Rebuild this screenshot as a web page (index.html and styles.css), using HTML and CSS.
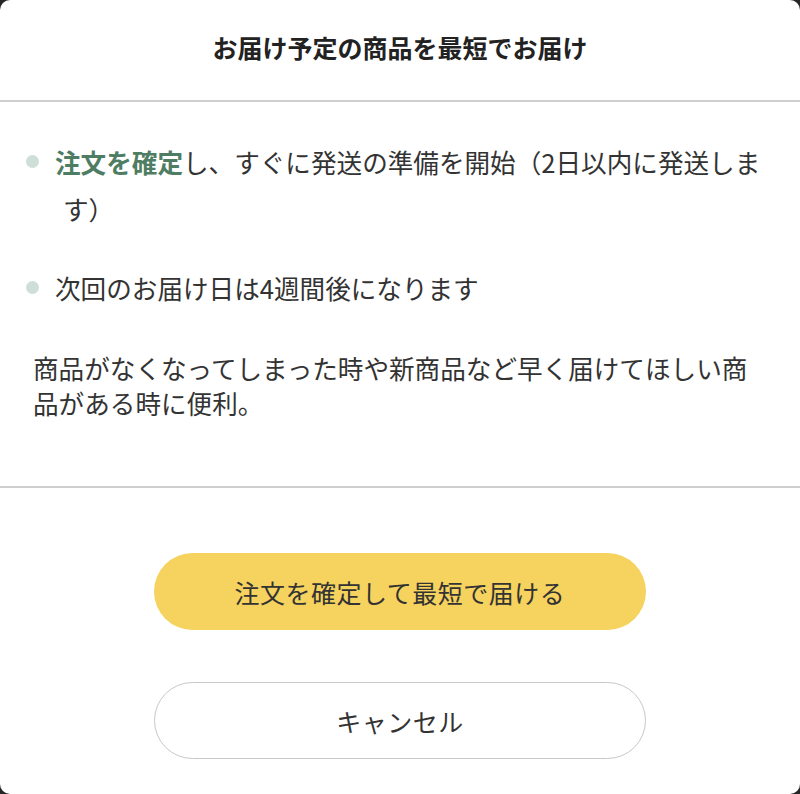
FILE: index.html
```html
<!DOCTYPE html>
<html lang="ja">
<head>
<meta charset="utf-8">
<link rel="stylesheet" href="styles.css">
</head>
<body>
<div class="modal">
  <header class="header">
    <h1 class="title">お届け予定の商品を最短でお届け</h1>
  </header>
  <section class="content">
    <ul class="list">
      <li class="item"><span class="dot"></span><span class="item-text"><strong class="accent">注文を確定</strong>し、すぐに発送の準備を開始（2日以内に発送します）</span></li>
      <li class="item"><span class="dot"></span><span class="item-text">次回のお届け日は4週間後になります</span></li>
    </ul>
    <p class="note">商品がなくなってしまった時や新商品など早く届けてほしい商品がある時に便利。</p>
  </section>
  <footer class="footer">
    <button class="btn btn-primary">注文を確定して最短で届ける</button>
    <button class="btn btn-secondary">キャンセル</button>
  </footer>
</div>
</body>
</html>
```

FILE: styles.css
```css
html, body {
  margin: 0;
  padding: 0;
  background: #262626;
}
body {
  font-family: "Noto Sans CJK JP", "Noto Sans", sans-serif;
  color: #333;
}
.modal {
  width: 800px;
  height: 794px;
  background: #fff;
  border-radius: 10px;
  overflow: hidden;
  display: flex;
  flex-direction: column;
}
.header {
  height: 100px;
  border-bottom: 2px solid #cfcfcf;
  display: flex;
  align-items: center;
  justify-content: center;
}
.title {
  margin: 0;
  font-size: 25px;
  font-weight: 700;
  letter-spacing: 0;
  color: #222;
  padding-bottom: 6px;
}
.content {
  padding: 36px 38px 66px 26px;
  border-bottom: 2px solid #cfcfcf;
}
.list {
  list-style: none;
  margin: 0;
  padding: 0;
  display: flex;
  flex-direction: column;
  gap: 32px;
}
.item {
  display: flex;
  align-items: flex-start;
  gap: 16px;
  font-size: 25.6px;
  line-height: 47px;
}
.dot {
  flex: none;
  width: 13px;
  height: 13px;
  border-radius: 50%;
  background: #cddfd6;
  margin-top: 17px;
}
.item-text {
  padding-left: 8px;
  text-indent: -8px;
}
.accent {
  color: #4f7d64;
  font-weight: 700;
}
.note {
  margin: 39px 0 0 7px;
  font-size: 25.6px;
  line-height: 35px;
}
.footer {
  flex: 1;
  display: flex;
  flex-direction: column;
  align-items: center;
  gap: 52px;
  padding-top: 65px;
}
.btn {
  width: 492px;
  height: 77px;
  border-radius: 39px;
  font-family: inherit;
  font-size: 25px;
  color: #333;
  letter-spacing: 0.5px;
  cursor: pointer;
  padding: 0;
}
.btn-primary {
  background: #f6d25e;
  border: none;
}
.btn-secondary {
  background: #fff;
  border: 1.5px solid #c8c8c8;
}
```
